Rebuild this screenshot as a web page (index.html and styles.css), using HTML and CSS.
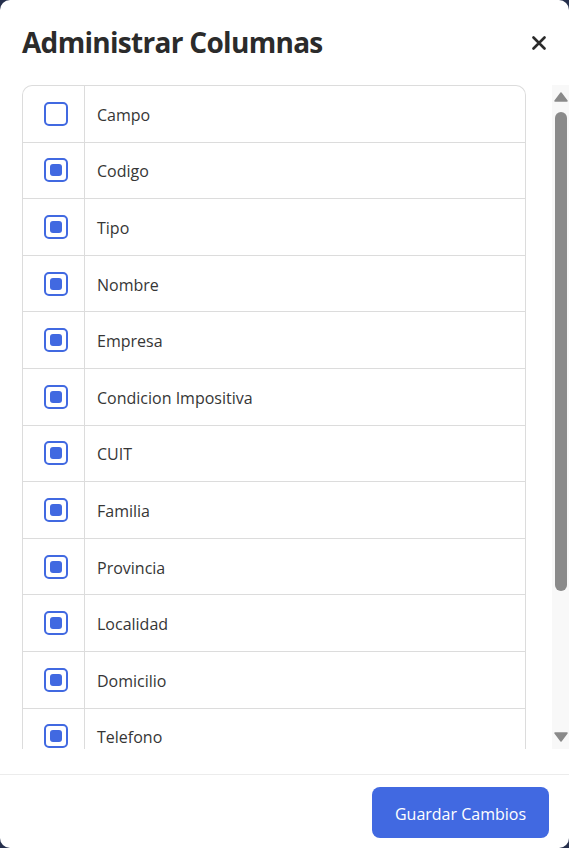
FILE: index.html
```html
<!DOCTYPE html>
<html lang="es">
<head>
<meta charset="utf-8">
<title>Administrar Columnas</title>
<link rel="stylesheet" href="styles.css">
</head>
<body>
<div class="modal">
  <div class="header">
    <h1 class="title">Administrar Columnas</h1>
    <button class="close" aria-label="Cerrar">
      <svg width="14" height="14" viewBox="0 0 14 14"><path d="M1.5 1.5 L12.5 12.5 M12.5 1.5 L1.5 12.5" stroke="#2b2b2b" stroke-width="2.6" stroke-linecap="round"/></svg>
    </button>
  </div>
  <div class="content">
    <div class="list">
      <div class="table">
        <div class="row"><div class="cell-check"><span class="box"></span></div><div class="cell-label">Campo</div></div>
        <div class="row"><div class="cell-check"><span class="box checked"></span></div><div class="cell-label">Codigo</div></div>
        <div class="row"><div class="cell-check"><span class="box checked"></span></div><div class="cell-label">Tipo</div></div>
        <div class="row"><div class="cell-check"><span class="box checked"></span></div><div class="cell-label">Nombre</div></div>
        <div class="row"><div class="cell-check"><span class="box checked"></span></div><div class="cell-label">Empresa</div></div>
        <div class="row"><div class="cell-check"><span class="box checked"></span></div><div class="cell-label">Condicion Impositiva</div></div>
        <div class="row"><div class="cell-check"><span class="box checked"></span></div><div class="cell-label">CUIT</div></div>
        <div class="row"><div class="cell-check"><span class="box checked"></span></div><div class="cell-label">Familia</div></div>
        <div class="row"><div class="cell-check"><span class="box checked"></span></div><div class="cell-label">Provincia</div></div>
        <div class="row"><div class="cell-check"><span class="box checked"></span></div><div class="cell-label">Localidad</div></div>
        <div class="row"><div class="cell-check"><span class="box checked"></span></div><div class="cell-label">Domicilio</div></div>
        <div class="row"><div class="cell-check"><span class="box checked"></span></div><div class="cell-label">Telefono</div></div>
      </div>
    </div>
    <div class="scrollbar">
      <div class="sb-btn"><svg width="14" height="10" viewBox="0 0 14 10"><path d="M7 1 L13 9 L1 9 Z" fill="#8a8a8a" stroke="#8a8a8a" stroke-width="1.5" stroke-linejoin="round"/></svg></div>
      <div class="sb-track"><div class="sb-thumb"></div></div>
      <div class="sb-btn"><svg width="14" height="10" viewBox="0 0 14 10"><path d="M1 1 L13 1 L7 9 Z" fill="#8a8a8a" stroke="#8a8a8a" stroke-width="1.5" stroke-linejoin="round"/></svg></div>
    </div>
  </div>
  <div class="footer">
    <button class="save">Guardar Cambios</button>
  </div>
</div>
</body>
</html>
```
FILE: styles.css
```css
html, body {
  margin: 0;
  padding: 0;
  background: #26304d;
}
body {
  font-family: "Open Sans", "Noto Sans", sans-serif;
  color: #333;
}
.modal {
  width: 569px;
  height: 848px;
  background: #fff;
  border-radius: 10px;
  display: flex;
  flex-direction: column;
  box-sizing: border-box;
  overflow: hidden;
}
.header {
  height: 85px;
  flex: none;
  display: flex;
  align-items: center;
  justify-content: space-between;
  padding: 0 23px 0 22px;
  box-sizing: border-box;
}
.title {
  margin: 0;
  font-size: 28px;
  font-weight: 700;
  color: #2b2b2b;
  line-height: 1.2;
  letter-spacing: -0.7px;
}
.close {
  border: 0;
  background: none;
  padding: 0;
  width: 14px;
  height: 14px;
  display: flex;
  cursor: pointer;
}
.content {
  flex: 1;
  display: flex;
  padding-left: 22px;
  margin-bottom: 25px;
  min-height: 0;
}
.list {
  flex: 1;
  overflow: hidden;
}
.table {
  border: 1px solid #dcdcdc;
  border-radius: 10px 10px 0 0;
  border-bottom: 0;
}
.row {
  display: flex;
  height: 56.6px;
  box-sizing: border-box;
  border-bottom: 1px solid #dcdcdc;
}
.cell-check {
  width: 62px;
  flex: none;
  box-sizing: border-box;
  border-right: 1px solid #dcdcdc;
  padding-left: 21px;
  display: flex;
  align-items: center;
}
.box {
  width: 24px;
  height: 24px;
  box-sizing: border-box;
  border: 2px solid #4169e1;
  border-radius: 5px;
  display: flex;
  align-items: center;
  justify-content: center;
}
.box.checked::after {
  content: "";
  width: 12px;
  height: 12px;
  border-radius: 3px;
  background: #4169e1;
}
.cell-label {
  flex: 1;
  display: flex;
  align-items: center;
  padding-left: 12px;
  padding-top: 2px;
  font-size: 16px;
  color: #363636;
}
.scrollbar {
  width: 17px;
  flex: none;
  margin-left: 26px;
  background: #f8f8f8;
  display: flex;
  flex-direction: column;
}
.sb-btn {
  height: 24px;
  flex: none;
  display: flex;
  align-items: center;
  justify-content: center;
}
.sb-track {
  flex: 1;
  padding: 3px 0 0 3px;
}
.sb-thumb {
  width: 12px;
  height: 479px;
  border-radius: 6px;
  background: #8a8a8a;
}
.footer {
  flex: none;
  border-top: 1px solid #ececec;
  padding: 12px 20px 10px;
  display: flex;
  justify-content: flex-end;
}
.save {
  width: 177px;
  height: 51px;
  border: 0;
  border-radius: 8px;
  background: #4169e1;
  color: #fff;
  font-family: "Open Sans", "Noto Sans", sans-serif;
  font-size: 16px;
  padding: 2px 0 0;
  cursor: pointer;
}
```
